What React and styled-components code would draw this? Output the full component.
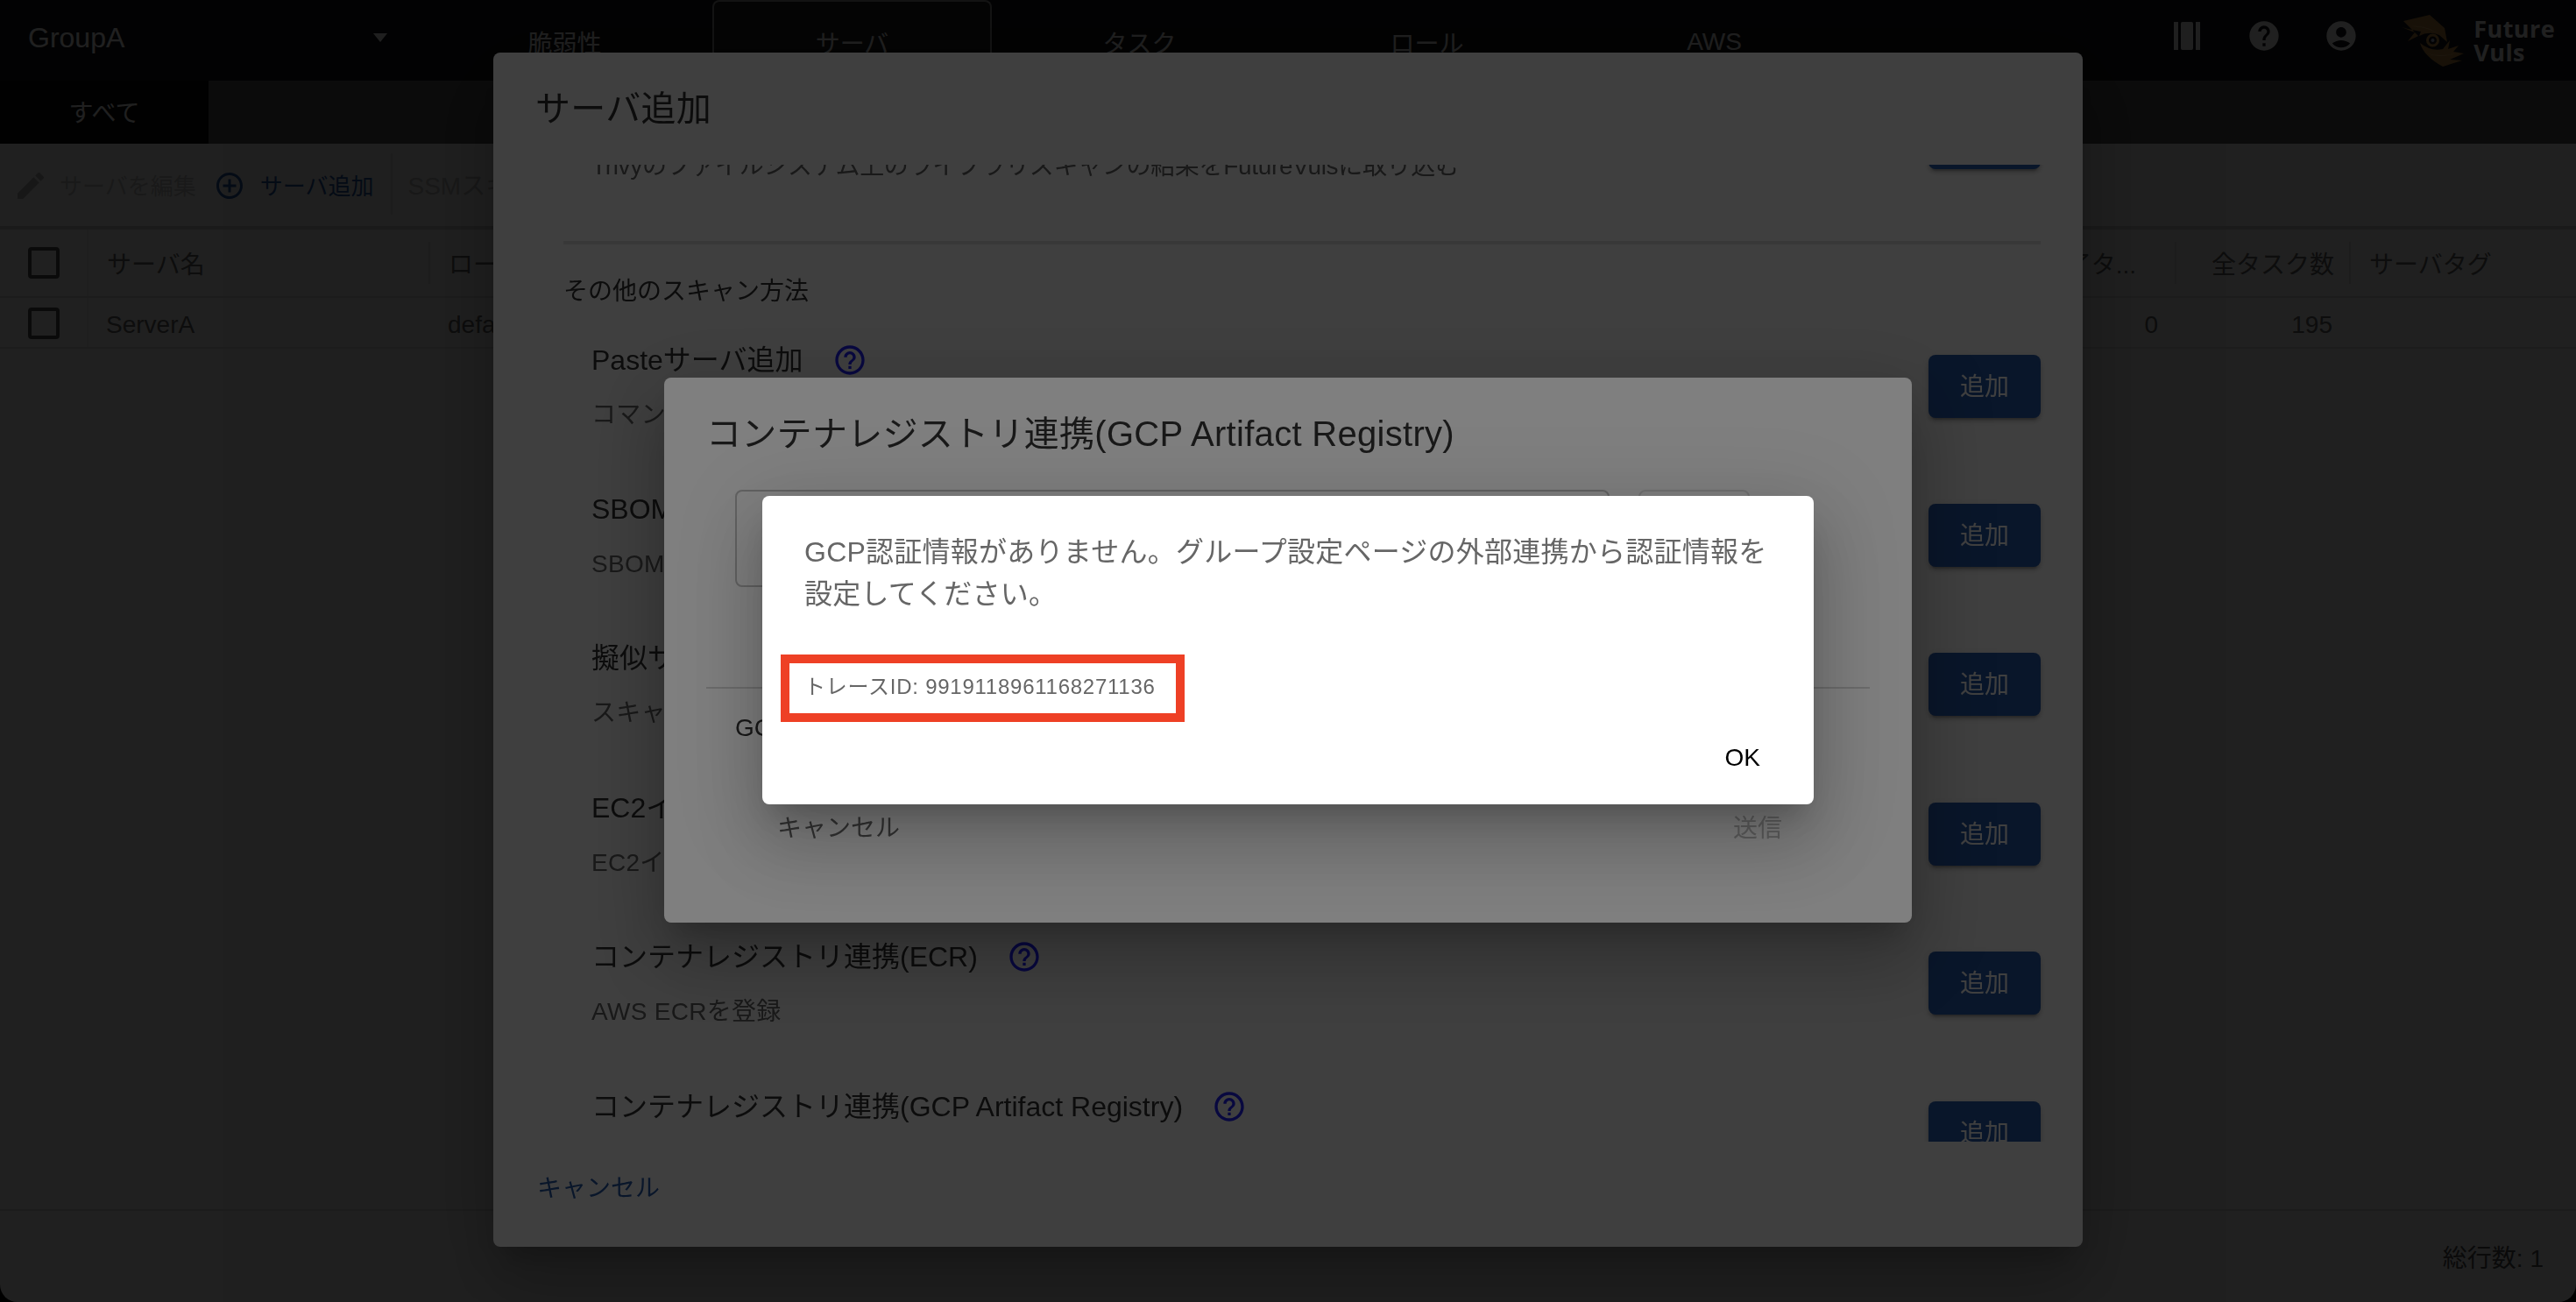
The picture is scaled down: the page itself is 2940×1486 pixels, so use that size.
import React from 'react'
import styled, { createGlobalStyle } from 'styled-components'
import { MdEdit, MdAddCircleOutline, MdHelp, MdHelpOutline, MdAccountCircle } from 'react-icons/md'

const FONT = '"Liberation Sans", "Noto Sans CJK JP", sans-serif'
const BLUE = '#2558a8'

const GlobalStyle = createGlobalStyle`
  html, body {
    margin: 0;
    height: 100%;
    overflow: hidden;
    background: #000;
    font-family: ${FONT};
  }
  * { box-sizing: border-box; }
`

function Barcode() {
  return (
    <BarIcon viewBox="0 0 30 32">
      <rect x="0" y="0" width="5" height="32" />
      <rect x="8" y="0" width="14" height="32" rx="2" />
      <rect x="25" y="0" width="5" height="32" />
    </BarIcon>
  )
}

function EyeLogo() {
  return (
    <svg width="90" height="70" viewBox="0 0 90 70">
      <path d="M13 13 L43 6 L60 21 L63 37 L54 29 Q42 24 31 30 L33 25 L18 22 L11 20 L26 26 L18 36 L30 30 Z" fill="#c08840" />
      <path d="M32 38 Q36 53 58 65 L80 58 L66 57 L82 50 L70 48 L76 41 L64 45 L66 35 L58 45 Q44 48 32 38 Z" fill="#c08840" />
      <path d="M22 19 Q40 17 56 30 Q44 20 22 19 Z" fill="#e0b070" />
      <path d="M40 50 Q54 54 72 50 Q54 56 40 50 Z" fill="#e0b070" />
      <circle cx="46.5" cy="35" r="6" fill="#141418" stroke="#d09448" strokeWidth="3" />
      <circle cx="46.5" cy="35" r="2" fill="#a8b8e0" />
    </svg>
  )
}

const scanRows = [
  { title: 'Trivyサーバ追加', desc: 'Trivyのファイルシステム上のライブラリスキャンの結果をFutureVulsに取り込む', tight: true },
]

const otherRows = [
  { title: 'Pasteサーバ追加', desc: 'コマンド結果を貼り付けてスキャン' },
  { title: 'SBOMインポート', desc: 'SBOMファイルをインポート' },
  { title: '擬似サーバ追加', desc: 'スキャンせずにサーバを登録' },
  { title: 'EC2インスタンス追加', desc: 'EC2インスタンスを登録' },
  { title: 'コンテナレジストリ連携(ECR)', desc: 'AWS ECRを登録' },
  { title: 'コンテナレジストリ連携(GCP Artifact Registry)', desc: 'GCP Artifact Registryを登録' },
]

function ScanRow({ title, desc, tight }) {
  return (
    <Row>
      <RowText>
        <RowTitle>
          {title}
          <HelpIcon size={40} />
        </RowTitle>
        <RowDesc $tight={tight}>{desc}</RowDesc>
      </RowText>
      <AddButton>追加</AddButton>
    </Row>
  )
}

export default function App() {
  return (
    <>
      <GlobalStyle />
      <Page>
        <Header>
          <GroupSelect>
            GroupA
            <Arrow />
          </GroupSelect>
          <Tabs>
            <Tab>脆弱性</Tab>
            <Tab $active>サーバ</Tab>
            <Tab>タスク</Tab>
            <Tab>ロール</Tab>
            <Tab>AWS</Tab>
          </Tabs>
          <HeaderRight>
            <IconGroup>
              <IconBox><Barcode /></IconBox>
              <MdHelp size={40} />
              <MdAccountCircle size={40} />
            </IconGroup>
            <Logo>
              <EyeLogo />
              <LogoText>Future<br />Vuls</LogoText>
            </Logo>
          </HeaderRight>
        </Header>
        <SubBar>
          <SubTab>すべて</SubTab>
        </SubBar>
        <Toolbar>
          <DisabledAction>
            <MdEdit size={40} />
            サーバを編集
          </DisabledAction>
          <PrimaryAction>
            <MdAddCircleOutline size={36} />
            サーバ追加
          </PrimaryAction>
          <ToolbarSep />
          <DisabledLabel>SSMスキャン</DisabledLabel>
        </Toolbar>
        <Main>
          <GridRow $head>
            <CheckCell><Checkbox /></CheckCell>
            <HeadCell $sep>サーバ名</HeadCell>
            <HeadCell>ロール</HeadCell>
            <HeadCell $sep $right $pad={46}>未完了タ...</HeadCell>
            <HeadCell $sep $right $pad={19}>全タスク数</HeadCell>
            <HeadCell>サーバタグ</HeadCell>
          </GridRow>
          <GridRow>
            <CheckCell $low><Checkbox /></CheckCell>
            <BodyCell>ServerA</BodyCell>
            <BodyCell>default</BodyCell>
            <BodyCell $right $pad={21}>0</BodyCell>
            <BodyCell $right $pad={21}>195</BodyCell>
            <BodyCell />
          </GridRow>
        </Main>
        <Footer>総行数: 1</Footer>
      </Page>

      <Overlay>
        <AddDialog>
          <DialogTitle>サーバ追加</DialogTitle>
          <Scroller>
            <ScrollInner>
              {scanRows.map((r) => <ScanRow key={r.title} {...r} />)}
              <ListDivider />
              <SubHeader>その他のスキャン方法</SubHeader>
              {otherRows.map((r) => <ScanRow key={r.title} {...r} />)}
            </ScrollInner>
          </Scroller>
          <AddActions>キャンセル</AddActions>
        </AddDialog>
      </Overlay>

      <Overlay>
        <RegistryDialog>
          <DialogTitle>コンテナレジストリ連携(GCP Artifact Registry)</DialogTitle>
          <FieldRow>
            <Field>Select</Field>
            <FieldButton />
          </FieldRow>
          <FormDivider />
          <FormNote>GCP Artifact Registryのリポジトリ</FormNote>
          <FormActions>
            <span>キャンセル</span>
            <DisabledText>送信</DisabledText>
          </FormActions>
        </RegistryDialog>
      </Overlay>

      <Overlay>
        <AlertDialog>
          <AlertMessage>
            GCP認証情報がありません。グループ設定ページの外部連携から認証情報を設定してください。
          </AlertMessage>
          <TraceId>トレースID: 9919118961168271136</TraceId>
          <AlertActions>
            <OkButton>OK</OkButton>
          </AlertActions>
          <Highlight />
        </AlertDialog>
      </Overlay>
    </>
  )
}

const Page = styled.div`
  height: 100vh;
  background: #fff;
  color: #666;
  display: flex;
  flex-direction: column;
  border-radius: 0 0 20px 20px;
  overflow: hidden;
`

const Header = styled.div`
  height: 92px;
  flex: none;
  background: #141418;
  display: flex;
  align-items: stretch;
  color: #fff;
`

const GroupSelect = styled.div`
  width: 485px;
  padding: 0 43px 6px 32px;
  display: flex;
  align-items: center;
  justify-content: space-between;
  font-size: 32px;
`

const Arrow = styled.span`
  width: 0;
  height: 0;
  border-left: 8px solid transparent;
  border-right: 8px solid transparent;
  border-top: 10px solid #fff;
`

const Tabs = styled.div`
  display: flex;
  gap: 9px;
`

const Tab = styled.div`
  width: 319px;
  display: flex;
  align-items: center;
  justify-content: center;
  padding-top: 2px;
  font-size: 28px;
  border-radius: 8px 8px 0 0;
  border: 2px solid ${(p) => (p.$active ? '#9a9a9a' : 'transparent')};
  border-bottom: none;
  background: ${(p) => (p.$active ? '#222' : 'transparent')};
`

const HeaderRight = styled.div`
  margin-left: auto;
  display: flex;
  align-items: center;
  padding-right: 24px;
`

const IconGroup = styled.div`
  display: flex;
  align-items: center;
  gap: 48px;
  padding-bottom: 10px;
`

const IconBox = styled.div`
  width: 40px;
  height: 40px;
  display: flex;
  align-items: center;
  justify-content: center;
`

const BarIcon = styled.svg`
  width: 30px;
  height: 32px;
  fill: #fff;
`

const Logo = styled.div`
  margin-left: 38px;
  display: flex;
  align-items: center;
  gap: 3px;
`

const LogoText = styled.div`
  font-family: "Open Sans", sans-serif;
  font-weight: 700;
  font-size: 27px;
  line-height: 27px;
  letter-spacing: 0.4px;
`

const SubBar = styled.div`
  height: 72px;
  flex: none;
  background: #585858;
  display: flex;
`

const SubTab = styled.div`
  width: 238px;
  padding-bottom: 2px;
  background: #0a0a0a;
  color: #fff;
  font-size: 28px;
  display: flex;
  align-items: center;
  justify-content: center;
`

const Toolbar = styled.div`
  height: 98px;
  flex: none;
  padding: 0 0 2px 15px;
  border-bottom: 4px solid #d0d0d0;
  display: flex;
  align-items: center;
  font-size: 26px;
  svg { margin-top: 4px; }
`

const DisabledAction = styled.div`
  display: flex;
  align-items: center;
  gap: 13px;
  color: #c8c8c8;
  svg { color: #b4b4b4; }
`

const PrimaryAction = styled.div`
  margin-left: 20px;
  display: flex;
  align-items: center;
  gap: 17px;
  color: ${BLUE};
`

const ToolbarSep = styled.div`
  width: 2px;
  height: 70px;
  margin-left: 19px;
  background: #e0e0e0;
`

const DisabledLabel = styled.div`
  margin-left: 18px;
  font-size: 28px;
  color: #c0c0c0;
`

const Main = styled.div`
  flex: 1;
`

const GridRow = styled.div`
  display: grid;
  grid-template-columns: 101px 390px 1700px 293px 199px 257px;
  height: ${(p) => (p.$head ? '78px' : '58px')};
  border-bottom: 2px solid #e0e0e0;
  align-items: stretch;
`

const CheckCell = styled.div`
  display: flex;
  align-items: center;
  justify-content: center;
  padding-top: ${(p) => (p.$low ? '2px' : '0')};
  border-right: 2px solid #efefef;
`

const Checkbox = styled.span`
  width: 36px;
  height: 36px;
  border: 4px solid #555;
  border-radius: 4px;
`

const HeadCell = styled.div`
  display: flex;
  align-items: center;
  padding: 0 ${(p) => p.$pad || 22}px 0 21px;
  justify-content: ${(p) => (p.$right ? 'flex-end' : 'flex-start')};
  font-size: 28px;
  white-space: nowrap;
  position: relative;
  ${(p) => p.$sep && `
    &::after {
      content: '';
      position: absolute;
      right: 0;
      top: 14px;
      bottom: 14px;
      width: 2px;
      background: #e0e0e0;
    }
  `}
`

const BodyCell = styled.div`
  display: flex;
  align-items: center;
  padding: 6px ${(p) => p.$pad || 21}px 0 20px;
  justify-content: ${(p) => (p.$right ? 'flex-end' : 'flex-start')};
  font-size: 28px;
`

const Footer = styled.div`
  height: 106px;
  flex: none;
  border-top: 2px solid #e0e0e0;
  padding-right: 37px;
  display: flex;
  align-items: center;
  justify-content: flex-end;
  font-size: 28px;
  color: #555;
`

const Overlay = styled.div`
  position: fixed;
  inset: 0;
  padding-bottom: 3px;
  background: rgba(0, 0, 0, 0.5);
  display: flex;
  align-items: center;
  justify-content: center;
`

const Dialog = styled.div`
  background: #fff;
  border-radius: 8px;
  position: relative;
  display: flex;
  flex-direction: column;
  box-shadow: 0 22px 30px -14px rgba(0, 0, 0, 0.2), 0 48px 76px 6px rgba(0, 0, 0, 0.14), 0 18px 92px 16px rgba(0, 0, 0, 0.12);
`

const DialogTitle = styled.div`
  padding: 32px 48px;
  font-size: 40px;
  line-height: 64px;
  letter-spacing: 0.3px;
  color: #333;
  flex: none;
`

const AddDialog = styled(Dialog)`
  width: 1814px;
  height: 1363px;
`

const Scroller = styled.div`
  height: 1115px;
  flex: none;
  overflow: hidden;
  padding: 0 48px 0 80px;
`

const ScrollInner = styled.div`
  margin-top: -116px;
`

const Row = styled.div`
  height: 170.4px;
  padding-left: 32px;
  display: flex;
  align-items: center;
  justify-content: space-between;
`

const RowText = styled.div`
  display: flex;
  flex-direction: column;
  gap: 18px;
`

const RowTitle = styled.div`
  display: flex;
  align-items: center;
  gap: 33px;
  font-size: 32px;
  line-height: 48px;
  color: #333;
`

const HelpIcon = styled(MdHelpOutline)`
  color: #2020ff;
`

const RowDesc = styled.div`
  font-size: 28px;
  line-height: 42px;
  letter-spacing: ${(p) => (p.$tight ? '-0.33px' : '0.3px')};
  color: #666;
`

const AddButton = styled.button`
  width: 128px;
  height: 72px;
  padding: 0 0 4px;
  border: none;
  border-radius: 8px;
  background: ${BLUE};
  color: #fff;
  font-family: ${FONT};
  font-size: 28px;
  box-shadow: 0 6px 2px -4px rgba(0, 0, 0, 0.2), 0 4px 4px rgba(0, 0, 0, 0.14), 0 2px 10px rgba(0, 0, 0, 0.12);
`

const ListDivider = styled.div`
  height: 4px;
  margin-top: 33px;
  background: #e0e0e0;
`

const SubHeader = styled.div`
  margin: 33px 0 1px;
  font-size: 28px;
  line-height: 42px;
  color: #333;
`

const AddActions = styled.div`
  padding: 33px 0 0 50px;
  font-size: 28px;
  line-height: 42px;
  color: ${BLUE};
`

const RegistryDialog = styled(Dialog)`
  width: 1424px;
`

const FieldRow = styled.div`
  display: flex;
  gap: 33px;
  padding-left: 81px;
`

const Field = styled.div`
  width: 998px;
  height: 111px;
  border: 2px solid #c4c4c4;
  border-radius: 8px;
  padding: 0 0 0 28px;
  display: flex;
  align-items: center;
  font-size: 28px;
  color: #666;
`

const FieldButton = styled.div`
  width: 127px;
  height: 72px;
  border: 2px solid #e0e0e0;
  border-radius: 8px;
`

const FormDivider = styled.div`
  height: 2px;
  margin: 114px 48px 0;
  background: #d8d8d8;
`

const FormNote = styled.div`
  margin-top: 24px;
  padding-left: 81px;
  font-size: 28px;
  line-height: 42px;
  color: #333;
`

const FormActions = styled.div`
  height: 72px;
  margin: 55px 148px 74px 129px;
  display: flex;
  align-items: center;
  justify-content: space-between;
  font-size: 28px;
  color: #666;
`

const DisabledText = styled.span`
  color: #bdbdbd;
`

const AlertDialog = styled(Dialog)`
  width: 1200px;
  padding: 40px 16px 18px 48px;
`

const AlertMessage = styled.div`
  padding-right: 26px;
  font-size: 32px;
  line-height: 48px;
  letter-spacing: 0.25px;
  color: #666;
`

const TraceId = styled.div`
  margin-top: 64px;
  font-size: 24px;
  line-height: 36px;
  letter-spacing: 0.75px;
  color: #666;
`

const AlertActions = styled.div`
  margin-top: 26px;
  display: flex;
  justify-content: flex-end;
`

const OkButton = styled.div`
  height: 72px;
  padding: 2px 45px 0 0;
  display: flex;
  align-items: center;
  font-size: 28px;
  color: #000;
`

const Highlight = styled.div`
  position: absolute;
  left: 21px;
  top: 181px;
  width: 461px;
  height: 77px;
  border: 10px solid #ee4025;
`
